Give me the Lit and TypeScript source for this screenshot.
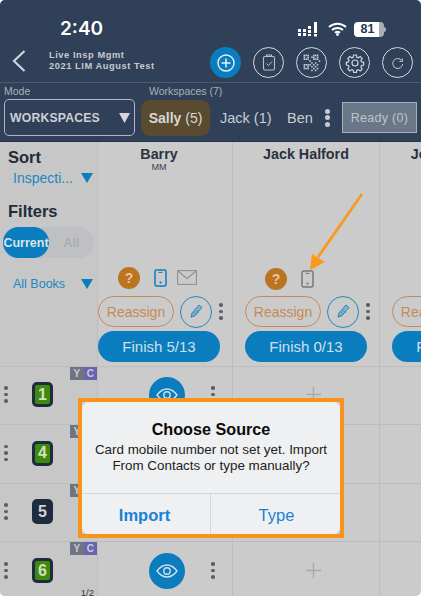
import { LitElement, html, css, svg } from "lit";
import { customElement } from "lit/decorators.js";

const dots = html`<span class="dots"><i></i><i></i><i></i></span>`;
const tri = html`<svg class="tri" width="12" height="10" viewBox="0 0 12 10"><path d="M0 0h12L6 10z" fill="#0a7dbe"/></svg>`;

const qrCells = [
  [0,0],[1,0],[2,0],[0,1],[2,1],[0,2],[1,2],[2,2],[5,0],[6,0],[7,0],[5,1],[7,1],[5,2],[6,2],[7,2],
  [0,5],[1,5],[2,5],[0,6],[2,6],[0,7],[1,7],[2,7],[4,4],[5,5],[6,4],[7,5],[5,7],[7,7],[6,6],[4,6],[3,3],[4,1],[3,5],[4,8],[6,8],[8,3]
];

const ICONS = {
  plus: svg`<circle cx="12" cy="12" r="8" fill="none" stroke="#e8eef3" stroke-width="1.4"/><path d="M12 7.5v9M7.5 12h9" stroke="#e8eef3" stroke-width="1.5"/>`,
  clip: svg`<rect x="6.5" y="5.5" width="11" height="13.5" rx="1.5" fill="none" stroke="#b9c0c8" stroke-width="1.1"/><path d="M9.5 5.5V4h5v1.5" fill="none" stroke="#b9c0c8" stroke-width="1.1"/><path d="M9.5 12.5l2 2 3.5-4" fill="none" stroke="#b9c0c8" stroke-width="1"/>`,
  qr: svg`<g fill="#c2c8cf" transform="translate(3.6 3.6) scale(1.88)">${qrCells.map(
    ([x, y]) => svg`<rect x=${x} y=${y} width=".85" height=".85"/>`
  )}</g>`,
  gear: svg`<circle cx="12" cy="12" r="3" fill="none" stroke="#d0d5da" stroke-width="1.2"/><path d="M10.6 4h2.8l.4 2.2 1.5.6 1.9-1.3 2 2-1.3 1.9.6 1.5 2.2.4v2.8l-2.2.4-.6 1.5 1.3 1.9-2 2-1.9-1.3-1.5.6-.4 2.2h-2.8l-.4-2.2-1.5-.6-1.9 1.3-2-2 1.3-1.9-.6-1.5-2.2-.4v-2.8l2.2-.4.6-1.5-1.3-1.9 2-2 1.9 1.3 1.5-.6z" fill="none" stroke="#d0d5da" stroke-width="1.2"/>`,
  refresh: svg`<path d="M15.8 9.6a5 5 0 1 0 .9 3.4" fill="none" stroke="#c2c8cf" stroke-width="1"/><path d="M16.4 7.4v3h-3" fill="none" stroke="#c2c8cf" stroke-width="1"/>`,
};

type Col = { name: string; sub?: string; phone?: string; mail?: boolean; finish: string; cls: string };
const COLS: Col[] = [
  { name: "Barry", sub: "MM", phone: "#0a7dbe", mail: true, finish: "Finish 5/13", cls: "first" },
  { name: "Jack Halford", phone: "#77797c", finish: "Finish 0/13", cls: "" },
  { name: "John Walker", finish: "Finish 0/13", cls: "" },
];

const ROWS = [
  { n: "1", green: true, eye: true, page: "" },
  { n: "4", green: true, eye: false, page: "" },
  { n: "5", green: false, eye: false, page: "" },
  { n: "6", green: true, eye: true, page: "1/2" },
];

@customElement("app-root")
export class AppRoot extends LitElement {
  static styles = css`
    :host { display: block; width: 421px; height: 596px; background: #fff; font-family: "Liberation Sans", Arial, sans-serif; }
    .app { position: relative; width: 421px; height: 596px; overflow: hidden; background: #cbcbcb; border-radius: 5px; display: flex; flex-direction: column; }

    .head { height: 142px; flex: none; background: #2f4058; box-sizing: border-box; border-bottom: 1px solid #26354a; color: #ccd0d6; }
    .status { height: 45px; display: flex; align-items: flex-start; padding: 18px 0 0 60px; box-sizing: border-box; }
    .time { font: 600 19px/22px Inter, sans-serif; color: #fff; width: 238px; }
    .sys { display: flex; align-items: center; gap: 7px; height: 22px; }
    .bat { display: flex; align-items: center; gap: 0; margin-left: 0; }
    .bat b { width: 30px; height: 15px; background: linear-gradient(90deg, #fff 84%, #a9afb7 84%); border-radius: 4px; color: #26354a; font: 700 12.5px/15px "Liberation Sans", sans-serif; text-align: center; padding-right: 3px; box-sizing: border-box; }
    .bat i { width: 1.5px; height: 5px; background: #a9afb7; border-radius: 0 2px 2px 0; }

    .nav { height: 38px; display: flex; align-items: center; box-sizing: border-box; border-bottom: 1px solid #4b5b71; padding: 0 8px 0 12px; }
    .back { margin-right: 23px; margin-top: -6px; flex: none; }
    .title { flex: 1; font-size: 9.3px; line-height: 11.5px; font-weight: 700; color: #c6cad0; letter-spacing: .55px; margin-top: -5px; }
    .acts { display: flex; gap: 12px; margin-top: -2px; }
    .act { width: 31px; height: 31px; border: 1.6px solid #d5d9de; border-radius: 50%; box-sizing: border-box; display: grid; place-items: center; }
    .act.on { background: #0a7dbe; border: none; }

    .ctl { display: flex; padding: 0 4px; }
    .modeC { width: 137px; flex: none; }
    .lbl { font-size: 10.5px; line-height: 17px; height: 16px; color: #aab1ba; }
    .select { width: 131px; height: 37px; border: 1.2px solid #aeb6c0; border-radius: 5px; box-sizing: border-box; display: flex; align-items: center; justify-content: space-between; padding: 0 4px 0 5px; font-size: 12.2px; font-weight: 700; letter-spacing: .2px; color: #ccd0d6; }
    .wsC { flex: 1; }
    .wsC .lbl { padding-left: 8px; }
    .tabs { display: flex; align-items: center; height: 37px; }
    .sally { width: 69px; height: 36px; background: #5a4a30; border-radius: 9px; display: grid; place-items: center; font-size: 14px; color: #d8d8d2; white-space: nowrap; }
    .sally b { font-weight: 700; }
    .tab { font-size: 14.5px; color: #c8cdd3; margin-left: 10px; width: 66px; white-space: nowrap; }
    .tab.ben { width: 37px; margin-left: 1px; }
    .dots.hdots { gap: 1.5px; width: 6px; }
    .dots.hdots i { background: #c5cad1; width: 5px; height: 5px; }
    .ready { margin-left: 12px; width: 75px; height: 31px; box-sizing: border-box; border: 1.2px solid #a9afb8; background: #6a7788; color: #bfc4cb; font-size: 12.5px; display: grid; place-items: center; letter-spacing: .3px; flex: none; }

    .grid { flex: 1; display: grid; grid-template-columns: 98px 135px 147px 147px; grid-template-rows: 224px 58px 59px 58px 60px; min-height: 0; }
    .side { background: #c7c7c7; border-right: 1px solid #bdbdbd; box-sizing: border-box; padding: 5px 3px 0; color: #222b38; }
    .h { font-size: 16.5px; line-height: 20px; font-weight: 700; padding-left: 5px; color: #232c39; }
    .pick { display: flex; justify-content: space-between; align-items: center; padding: 0 1px 0 10px; color: #1b87c0; white-space: nowrap; }
    .sortP { font-size: 14px; height: 22px; margin-bottom: 12px; }
    .booksP { font-size: 12.5px; height: 20px; margin-top: 16px; }
    .toggle { display: flex; width: 91px; height: 31px; border-radius: 16px; background: #bfc0c3; margin-top: 6px; font-size: 12.5px; font-weight: 700; }
    .toggle b { width: 46px; background: #0a7dbe; color: #d9e4ec; border-radius: 16px; display: grid; place-items: center; }
    .toggle span { flex: 1; display: grid; place-items: center; color: #a9adb2; font-size: 12.5px; font-weight: 700; }

    .col { border-right: 1px solid #bdbdbd; box-sizing: border-box; padding: 4px 12px 0; width: 100%; display: flex; flex-direction: column; overflow: hidden; }
    .col.first { padding-left: 0; }
    .col > * { width: 122px; flex: none; }
    .nm { text-align: center; font-size: 14.3px; line-height: 17px; font-weight: 700; color: #29323f; white-space: nowrap; height: 17px; }
    .sub { text-align: center; font-size: 9px; line-height: 9px; color: #3a4350; height: 8px; }
    .col .spacer { flex: 1; }
    .ico { display: flex; align-items: center; padding: 2px 0 0 20px; gap: 14px; height: 26px; margin-bottom: 5px; box-sizing: border-box; }
    .col.first .ico { padding: 0 0 1px 20px; }
    .q { width: 22px; height: 22px; border-radius: 50%; background: #bc7423; color: #e4c79f; display: grid; place-items: center; font-size: 14px; font-weight: 700; flex: none; }
    .mail { margin-left: -4px; }
    .btns { display: flex; align-items: center; height: 31px; position: relative; }
    .re { width: 76px; height: 31px; box-sizing: border-box; border: 1.3px solid #c58a58; border-radius: 16px; color: #c68a55; display: grid; place-items: center; font-size: 14px; flex: none; }
    .pen { width: 32px; height: 32px; box-sizing: border-box; margin-left: 6px; border: 1.2px solid #2a86b5; border-radius: 50%; display: grid; place-items: center; flex: none; }
    .dotsWrap { margin-left: 7px; flex: none; display: flex; }
    .fin { height: 31px; border-radius: 16px; margin: 4px 0 4px; background: #0a7dbe; color: #cfe0ec; display: grid; place-items: center; font-size: 15px; }

    .dots { display: inline-flex; flex-direction: column; gap: 3px; align-items: center; width: 4px; }
    .dots i { width: 3.6px; height: 3.6px; border-radius: 50%; background: #5a6068; display: block; }

    .rowL { background: #c7c7c7; border-top: 1px solid #bdbdbd; border-right: 1px solid #bdbdbd; box-sizing: border-box; display: flex; align-items: center; padding: 0 0 2px 4px; position: relative; }
    .tags { position: absolute; top: 0; right: 0; display: flex; height: 13px; font-size: 10px; line-height: 13px; font-weight: 700; color: #c9ccd6; text-align: center; }
    .tags span { width: 13.5px; background: #6f7580; }
    .tags span + span { background: #6a64ae; }
    .badge { margin-left: 24px; width: 21px; height: 25px; background: #1f2b3f; border-radius: 5px; display: grid; place-items: center; box-sizing: border-box; }
    .badge b { width: 15px; height: 19px; border-radius: 2px; display: grid; place-items: center; color: #cfd6d6; font-size: 16px; font-weight: 700; }
    .badge b.g { background: #3f8a0c; color: #cfe0c0; }
    .page { position: absolute; right: 3px; top: 45px; font-size: 9.5px; line-height: 11px; color: #333b45; }
    .cell { border-top: 1px solid #bdbdbd; border-right: 1px solid #bdbdbd; box-sizing: border-box; display: flex; align-items: center; justify-content: center; position: relative; padding-bottom: 2px; }
    .cell.first { padding-right: 12px; justify-content: flex-start; }
    .eye { margin-left: 51px; width: 36px; height: 36px; border-radius: 50%; background: #0a7dbe; display: grid; place-items: center; flex: none; }
    .cell.first .dots { margin-left: 26px; }
    .plus { color: #a2acb5; margin-left: 14px; }

    .dlg { position: absolute; left: 78px; top: 398px; width: 266px; height: 140px; box-sizing: border-box; border: 4px solid #f7941d; background: #cbcbcb; }
    .box { height: 100%; background: #eef0f1; border-radius: 6px; display: flex; flex-direction: column; color: #0b0b0b; text-align: center; }
    .t { font: 700 16.2px/20px "Liberation Sans", sans-serif; margin-top: 17px; }
    .m { font: 13.4px/16px "Liberation Sans", sans-serif; margin-top: 3px; color: #1d1d1d; padding: 0 8px; flex: 1; }
    .bs { height: 41px; display: grid; grid-template-columns: 129px 1fr; border-top: 1px solid #d5d7d9; color: #1b80d6; font-size: 16.5px; box-sizing: border-box; }
    .bs span { display: grid; place-items: center; padding: 2px 0 0 2px; }
    .bs b { display: grid; place-items: center; border-right: 1px solid #d5d7d9; font-weight: 700; padding: 2px 3px 0 0; }
    .arrow { position: absolute; left: 295px; top: 185px; pointer-events: none; }
  `;

  private act(k: keyof typeof ICONS, on = false) {
    return html`<div class="act ${on ? "on" : ""}"><svg width="24" height="24" viewBox="0 0 24 24">${ICONS[k]}</svg></div>`;
  }

  private colHead(c: Col) {
    const pen = html`<svg width="18" height="20" viewBox="0 0 18 20"><path d="M4 15l1-4 7-8 3 2.6-7 8z" fill="#86b0cc" stroke="#2a86b5" stroke-width="1"/><path d="M4 15l3.6-1.2" stroke="#2a86b5"/><path d="M6.5 10l3.3 2.8M8.5 8l3.3 2.8" stroke="#2a86b5" stroke-width=".7"/></svg>`;
    return html`<div class="col ${c.cls}">
      <div class="nm">${c.name}</div>
      ${c.sub ? html`<div class="sub">${c.sub}</div>` : ""}
      <div class="spacer"></div>
      <div class="ico">
        ${c.phone
          ? html`<span class="q">?</span>
              <svg width="13" height="18" viewBox="0 0 13 18"><rect x="1" y="1" width="11" height="16" rx="1.5" fill="none" stroke=${c.phone} stroke-width="1.5"/><path d="M4.5 3.4h4" stroke=${c.phone}/><circle cx="6.5" cy="13.6" r="1.1" fill=${c.phone}/></svg>`
          : ""}
        ${c.mail ? html`<svg class="mail" width="20" height="15" viewBox="0 0 20 15"><rect x=".6" y=".6" width="18.8" height="13.8" fill="none" stroke="#8c9196" stroke-width="1.1"/><path d="M1 1l9 7.5L19 1" fill="none" stroke="#8c9196" stroke-width="1.1"/></svg>` : ""}
      </div>
      <div class="btns">
        <div class="re">Reassign</div>
        <div class="pen">${pen}</div>
        <div class="dotsWrap">${dots}</div>
      </div>
      <div class="fin">${c.finish}</div>
    </div>`;
  }

  private eye() {
    return html`<div class="eye"><svg width="22" height="14" viewBox="0 0 22 14"><path d="M1 7c3-4 6.500-6 10-6s7 2 10 6c-3 4-6.500 6-10 6S4 11 1 7z" fill="none" stroke="#cfe0ec" stroke-width="1.4"/><circle cx="11" cy="7" r="3.200" fill="none" stroke="#cfe0ec" stroke-width="1.4"/></svg></div>`;
  }

  render() {
    return html`<div class="app">
      <header class="head">
        <div class="status">
          <div class="time">2:40</div>
          <div class="sys">
            <svg width="23" height="15" viewBox="0 0 23 15" fill="#fff"><rect x="0" y="7" width="3" height="3"/><rect x="0" y="11" width="3" height="3"/><rect x="5" y="7" width="3" height="3"/><rect x="5" y="11" width="3" height="3"/><rect x="10" y="4" width="3" height="3"/><rect x="10" y="8" width="3" height="3"/><rect x="10" y="12" width="3" height="2"/><rect x="16" y="0" width="3" height="11"/><rect x="16" y="12" width="3" height="2.500"/></svg>
            <svg width="19" height="14" viewBox="0 0 19 14"><path d="M1 5c5-4.500 12-4.500 17 0M4 8c3.200-2.800 7.800-2.800 11 0M7 10.800c1.500-1.200 3.500-1.200 5 0" fill="none" stroke="#fff" stroke-width="2"/><circle cx="9.500" cy="12.500" r="1.400" fill="#fff"/></svg>
            <div class="bat"><b>81</b><i></i></div>
          </div>
        </div>
        <div class="nav">
          <svg class="back" width="14" height="22" viewBox="0 0 14 22"><path d="M12.500 1L2 11l10.500 10" fill="none" stroke="#ced3d9" stroke-width="2.200"/></svg>
          <div class="title">Live Insp Mgmt<br />2021 LIM August Test</div>
          <div class="acts">
            ${this.act("plus", true)}${this.act("clip")}${this.act("qr")}${this.act("gear")}${this.act("refresh")}
          </div>
        </div>
        <div class="ctl">
          <div class="modeC">
            <div class="lbl">Mode</div>
            <div class="select">WORKSPACES <svg width="11" height="10" viewBox="0 0 11 10"><path d="M0 0h11L5.500 10z" fill="#d2d6da"/></svg></div>
          </div>
          <div class="wsC">
            <div class="lbl">Workspaces (7)</div>
            <div class="tabs">
              <div class="sally"><span><b>Sally</b> (5)</span></div>
              <div class="tab">Jack (1)</div>
              <div class="tab ben">Ben</div>
              <span class="dots hdots"><i></i><i></i><i></i></span>
              <div class="ready">Ready (0)</div>
            </div>
          </div>
        </div>
      </header>

      <div class="grid">
        <aside class="side">
          <div class="h">Sort</div>
          <div class="pick sortP"><span>Inspecti...</span>${tri}</div>
          <div class="h">Filters</div>
          <div class="toggle"><b>Current</b><span>All</span></div>
          <div class="pick booksP"><span>All Books</span>${tri}</div>
        </aside>
        ${COLS.map((c) => this.colHead(c))}
        ${ROWS.map(
          (r) => html`
            <div class="rowL">
              ${dots}
              <div class="tags"><span>Y</span><span>C</span></div>
              <div class="badge"><b class=${r.green ? "g" : ""}>${r.n}</b></div>
              ${r.page ? html`<div class="page">${r.page}</div>` : ""}
            </div>
            <div class="cell first">${this.eye()}${dots}</div>
            <div class="cell"><svg class="plus" width="15" height="15" viewBox="0 0 15 15"><path d="M7.500 0v15M0 7.500h15" stroke="currentColor" stroke-width="1.500"/></svg></div>
            <div class="cell"></div>
          `
        )}
      </div>

      <svg class="arrow" width="75" height="95" viewBox="0 0 75 95"><path d="M67 9L23 72" stroke="#f79a1e" stroke-width="2.800" fill="none"/><path d="M15 85l2-16 13 8z" fill="#f79a1e"/></svg>

      <div class="dlg" role="dialog">
        <div class="box">
          <div class="t">Choose Source</div>
          <div class="m">Card mobile number not set yet. Import From Contacts or type manually?</div>
          <div class="bs"><b>Import</b><span>Type</span></div>
        </div>
      </div>
    </div>`;
  }
}
